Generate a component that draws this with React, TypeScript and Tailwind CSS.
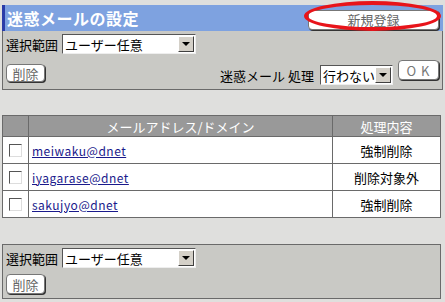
import React from 'react'

const font = { fontFamily: '"Noto Sans CJK JP", "Noto Sans", sans-serif' }

function Select({ value, width }: { value: string; width: string }) {
  return (
    <div
      className={`flex items-center h-[20px] bg-white border border-t-[#555] border-l-[#555] border-b-[#eee] border-r-[#eee] ${width}`}
    >
      <span className="flex-1 min-w-0 pl-[2px] text-[13px] leading-none text-black whitespace-nowrap">{value}</span>
      <span className="shrink-0 w-[16px] h-[16px] mr-[1px] flex items-center justify-center bg-[#d4d0c8] border border-t-white border-l-white border-b-[#404040] border-r-[#404040]">
        <span className="w-0 h-0 border-x-[4px] border-x-transparent border-t-[4px] border-t-black" />
      </span>
    </div>
  )
}

function Btn({ label, className = '' }: { label: string; className?: string }) {
  return (
    <button
      className={`bg-white border border-[#777] rounded-[4px] shadow-[1px_1px_0_#333] text-[#666] text-[13px] leading-none ${className}`}
    >
      {label}
    </button>
  )
}

const rows = [
  { mail: 'meiwaku@dnet', action: '強制削除' },
  { mail: 'iyagarase@dnet', action: '削除対象外' },
  { mail: 'sakujyo@dnet', action: '強制削除' },
]

export default function App() {
  return (
    <div className="w-[445px] h-[302px] bg-[#dfdfdd] pt-[5px] px-[2px] overflow-hidden" style={font}>
      {/* Title bar */}
      <div className="h-[26px] flex items-center justify-between bg-[#7ea2e0] border-l-[3px] border-[#2a3ca8] pr-[4px]">
        <span className="pl-[2px] text-white text-[16px] font-bold leading-none tracking-[0.5px]">迷惑メールの設定</span>
        <div className="relative">
          <Btn label="新規登録" className="w-[131px] h-[20px] text-[#555]" />
          <span className="absolute left-[-4px] top-[-5px] w-[137px] h-[30px] rounded-[50%] border-[4px] border-[#e8141a] pointer-events-none" />
        </div>
      </div>

      {/* Top panel */}
      <div className="h-[59px] bg-[#c9c9c5] border border-t-0 border-[#6a6a6a] pl-[3px] pr-[3px] pt-[3px]">
        <div className="flex items-center gap-[4px]">
          <span className="text-[13px] leading-none text-black">選択範囲</span>
          <Select value="ユーザー任意" width="w-[134px]" />
        </div>
        <div className="flex items-start mt-[5px]">
          <Btn label="削除" className="mt-[5px] w-[39px] h-[18px]" />
          <div className="flex-1" />
          <span className="mt-[10px] text-[13px] leading-none text-black">迷惑メール 処理</span>
          <div className="mt-[6px] ml-[6px]">
            <Select value="行わない" width="w-[73px]" />
          </div>
          <Btn label="O K" className="mt-[1px] ml-[5px] w-[41px] h-[20px] text-[#777] tracking-[1px]" />
        </div>
      </div>

      {/* Table */}
      <table className="mt-[25px] w-[439px] border-collapse text-[13px] leading-none">
        <thead>
          <tr className="h-[21px] bg-[#999999] text-white">
            <th className="w-[26px] border border-[#6a6a6a] font-normal" />
            <th className="border border-[#6a6a6a] font-normal">メールアドレス/ドメイン</th>
            <th className="w-[108px] border border-[#6a6a6a] font-normal">処理内容</th>
          </tr>
        </thead>
        <tbody className="bg-white">
          {rows.map((r) => (
            <tr key={r.mail} className="h-[27px]">
              <td className="border border-[#6a6a6a]">
                <span className="block mx-auto w-[13px] h-[13px] bg-white border border-t-[#555] border-l-[#555] border-b-[#ddd] border-r-[#ddd]" />
              </td>
              <td className="border border-[#6a6a6a] pl-[3px]">
                <a href="#" className="text-[#1a1a8c] underline text-[12px] tracking-[0.5px]">
                  {r.mail}
                </a>
              </td>
              <td className="border border-[#6a6a6a] text-center text-black">{r.action}</td>
            </tr>
          ))}
        </tbody>
      </table>

      {/* Bottom panel */}
      <div className="mt-[26px] h-[55px] w-[439px] bg-[#c9c9c5] border border-[#6a6a6a] pl-[3px] pt-[3px]">
        <div className="flex items-center gap-[4px]">
          <span className="text-[13px] leading-none text-black">選択範囲</span>
          <Select value="ユーザー任意" width="w-[134px]" />
        </div>
        <Btn label="削除" className="mt-[6px] w-[39px] h-[20px]" />
      </div>
    </div>
  )
}
